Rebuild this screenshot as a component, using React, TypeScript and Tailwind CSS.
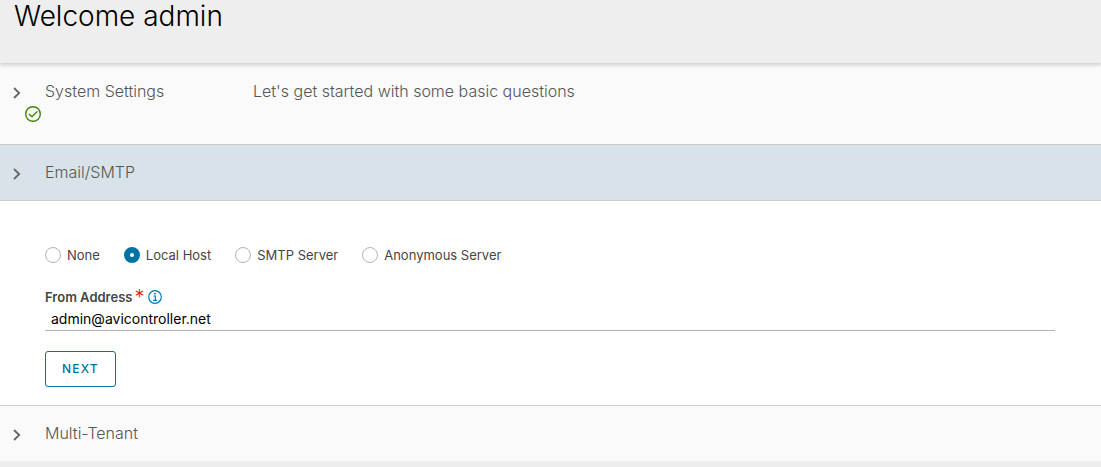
import { useState, type ReactNode } from "react";

function Chevron() {
  return (
    <svg viewBox="0 0 10 12" className="h-3 w-2.5" fill="none" stroke="#666666" strokeWidth="1.8" aria-hidden="true">
      <path d="M2 1 7.2 6 2 11" />
    </svg>
  );
}

function CheckCircle() {
  return (
    <svg viewBox="0 0 16 16" className="h-4 w-4" fill="none" stroke="#3c8500" aria-label="Completed" role="img">
      <circle cx="8" cy="8" r="7.3" strokeWidth="1.4" />
      <path d="M4.2 8.2 7 10.8 12 5.7" strokeWidth="1.3" strokeLinecap="round" strokeLinejoin="round" />
    </svg>
  );
}

function InfoCircle() {
  return (
    <svg viewBox="0 0 14 14" className="h-3.5 w-3.5" fill="none" stroke="#0079b8" aria-hidden="true">
      <circle cx="7" cy="7" r="6.3" strokeWidth="1.2" />
      <path d="M5.4 6H7.3V10.2M5 10.4H9.2" strokeWidth="1.1" />
      <circle cx="7" cy="3.7" r="0.9" fill="#0079b8" stroke="none" />
    </svg>
  );
}

type StepProps = {
  title: string;
  description?: string;
  done?: boolean;
  active?: boolean;
  onToggle?: () => void;
  children?: ReactNode;
};

function Step({ title, description, done, active, onToggle, children }: StepProps) {
  return (
    <section>
      <h2>
        <button
          type="button"
          aria-expanded={!!active}
          onClick={onToggle}
          className={`grid w-full grid-cols-[45px_208px_1fr] items-start text-left text-base leading-6 font-light text-[#565656] ${
            active ? "border-y border-[#cccccc] bg-[#d8e3e9]" : "bg-[#fafafa]"
          } ${done ? "pt-4 pb-[22px]" : "pt-[15px] pb-4"}`}
        >
          <span className="flex flex-col gap-[3px] pr-1 pl-3">
            <span className="flex h-6 items-end pb-1">
              <Chevron />
            </span>
            {done && (
              <span className="flex justify-end">
                <CheckCircle />
              </span>
            )}
          </span>
          <span>{title}</span>
          <span>{description}</span>
        </button>
      </h2>
      {children}
    </section>
  );
}

const servers = ["None", "Local Host", "SMTP Server", "Anonymous Server"];

export default function App() {
  const [server, setServer] = useState("Local Host");
  const [address, setAddress] = useState("admin@avicontroller.net");
  const [open, setOpen] = useState(true);

  return (
    <main className="min-h-screen bg-[#ededed] font-['Inter',sans-serif]">
      <header className="relative bg-[#eeeeee] px-3.5 pb-[31px] shadow-[0_2px_4px_rgba(0,0,0,0.18)]">
        <h1 className="text-[28px] leading-8 font-light text-black">Welcome admin</h1>
      </header>

      <Step title="System Settings" description="Let's get started with some basic questions" done />

      <Step title="Email/SMTP" active={open} onToggle={() => setOpen(!open)}>
        {open && (
          <form
            className="border-b border-[#cccccc] bg-white pt-11 pr-[46px] pb-[18px] pl-[45px]"
            onSubmit={(e) => e.preventDefault()}
          >
            <fieldset className="flex flex-wrap gap-x-6 text-[13px] leading-5 text-[#454545]">
              {servers.map((name) => (
                <label key={name} className="flex items-center gap-1.5 whitespace-nowrap">
                  <input
                    type="radio"
                    name="server"
                    value={name}
                    checked={server === name}
                    onChange={() => setServer(name)}
                    className="h-4 w-4 shrink-0 appearance-none rounded-full border border-[#b3b3b3] bg-white checked:border-6 checked:border-[#0072a3]"
                  />
                  {name}
                </label>
              ))}
            </fieldset>

            <div className="mt-[22px] flex h-5 items-center">
              <label htmlFor="from" className="text-[13px] leading-5 font-semibold text-[#454545]">
                From Address
              </label>
              <span className="ml-0.5 h-5 text-xl leading-5 font-light text-[#e12200]">*</span>
              <span className="ml-1">
                <InfoCircle />
              </span>
            </div>
            <input
              id="from"
              type="text"
              value={address}
              onChange={(e) => setAddress(e.target.value)}
              className="block h-6 w-full border-b border-[#b3b3b3] px-1.5 text-sm text-black outline-none"
            />

            <button
              type="submit"
              className="mt-5 h-9 rounded-[3px] border border-[#0072a3] px-4 text-xs font-medium tracking-widest text-[#0072a3]"
            >
              NEXT
            </button>
          </form>
        )}
      </Step>

      <Step title="Multi-Tenant" />
    </main>
  );
}
